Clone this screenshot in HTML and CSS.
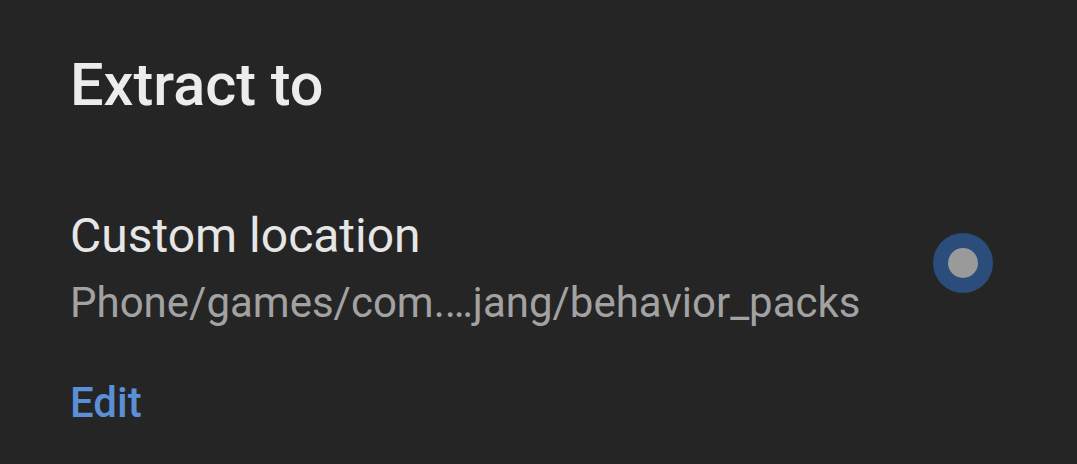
FILE: index.html
```html
<!DOCTYPE html>
<html>
<head>
<meta charset="utf-8">
<link rel="stylesheet" href="styles.css">
</head>
<body>
<div class="dialog">
  <h1 class="title">Extract to</h1>
  <div class="option">
    <div class="option-text">
      <div class="label">Custom location</div>
      <div class="path">Phone/games/com.…jang/behavior_packs</div>
    </div>
    <div class="radio"><div class="radio-dot"></div></div>
  </div>
  <div class="edit">Edit</div>
</div>
</body>
</html>
```
FILE: styles.css
```css
html, body {
  margin: 0;
  padding: 0;
  background: #252525;
  width: 1077px;
  height: 464px;
  overflow: hidden;
  font-family: Roboto, "Noto Sans", sans-serif;
}
.dialog {
  padding: 50px 84px 0 70px;
  display: flex;
  flex-direction: column;
}
.title {
  margin: 0;
  font-size: 59.4px;
  font-weight: 500;
  color: #ececec;
  line-height: 70px;
}
.option {
  margin-top: 86px;
  display: flex;
  align-items: flex-start;
  justify-content: space-between;
}
.label {
  font-size: 48px;
  color: #e6e6e6;
  line-height: 60px;
}
.path {
  font-size: 42px;
  color: #a2a2a2;
  line-height: 74px;
}
.radio {
  width: 60px;
  height: 60px;
  border-radius: 50%;
  background: #2b4d7c;
  display: flex;
  align-items: center;
  justify-content: center;
  margin-top: 27px;
}
.radio-dot {
  width: 30px;
  height: 30px;
  border-radius: 50%;
  background: #9a9a9a;
}
.edit {
  margin-top: 38px;
  font-size: 42px;
  font-weight: 500;
  color: #5b8fd6;
  line-height: 50px;
}
```
